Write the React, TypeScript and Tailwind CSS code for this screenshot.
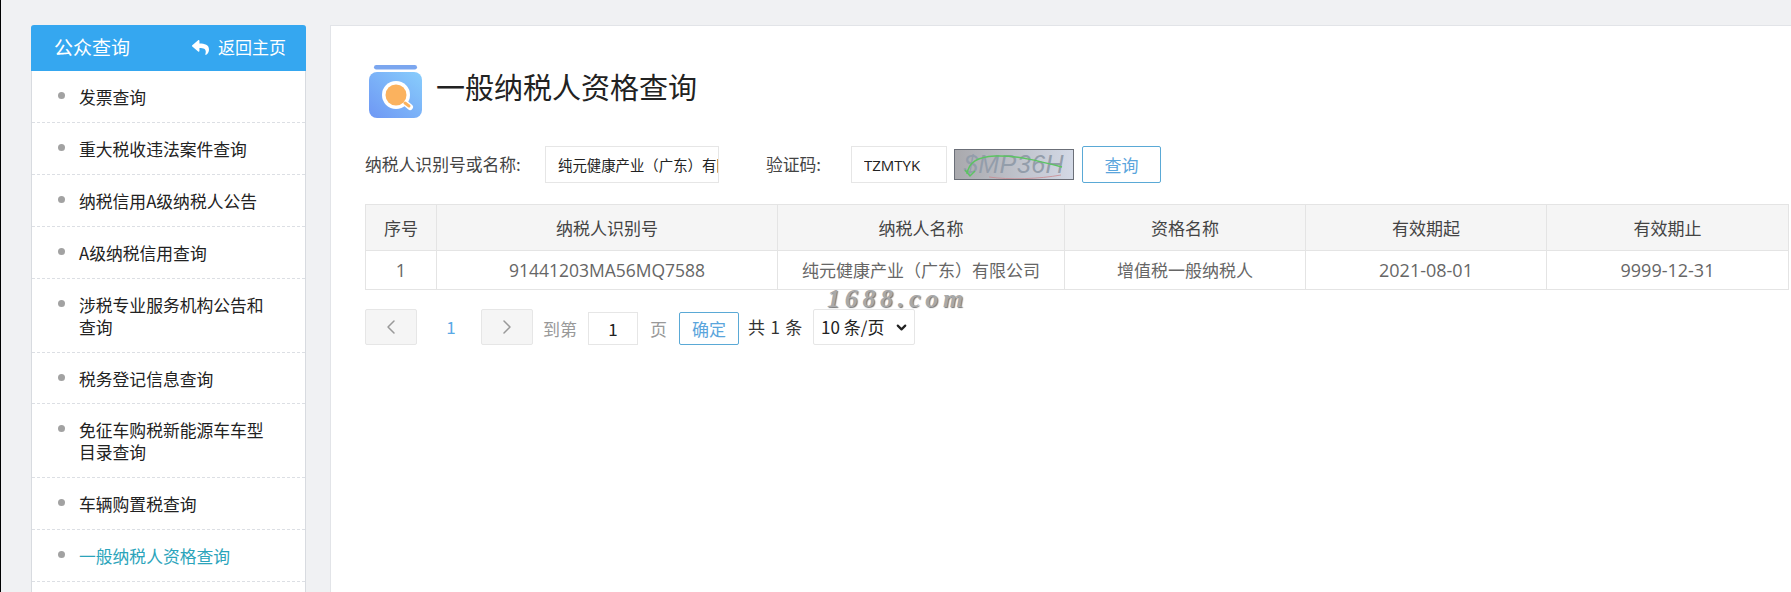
import React from 'react';
import { FaReply } from 'react-icons/fa';
import { ChevronLeft, ChevronRight, ChevronDown } from 'lucide-react';

const menu = [
  { label: '发票查询', h: 'h-[52px]' },
  { label: '重大税收违法案件查询', h: 'h-[52px]' },
  { label: '纳税信用A级纳税人公告', h: 'h-[52px]' },
  { label: 'A级纳税信用查询', h: 'h-[52px]' },
  { label: '涉税专业服务机构公告和查询', h: 'h-[74px]' },
  { label: '税务登记信息查询', h: 'h-[51px]' },
  { label: '免征车购税新能源车车型目录查询', h: 'h-[74px]' },
  { label: '车辆购置税查询', h: 'h-[52px]' },
  { label: '一般纳税人资格查询', h: 'h-[52px]', active: true },
  { label: '', h: 'h-[52px]' },
];

const latin = "font-['Open_Sans'] text-[18px]";

const columns = [
  { title: '序号', value: '1', w: 'w-[71px]', cell: latin },
  { title: '纳税人识别号', value: '91441203MA56MQ7588', w: 'w-[341px]', cell: "font-['Open_Sans'] text-[17.5px]" },
  { title: '纳税人名称', value: '纯元健康产业（广东）有限公司', w: 'w-[287px]', cell: '' },
  { title: '资格名称', value: '增值税一般纳税人', w: 'w-[241px]', cell: '' },
  { title: '有效期起', value: '2021-08-01', w: 'w-[241px]', cell: latin },
  { title: '有效期止', value: '9999-12-31', w: 'w-[242px]', cell: latin },
];

const QueryIcon = () => (
  <svg width="54" height="53" viewBox="0 0 54 53" className="shrink-0">
    <defs>
      <linearGradient id="bookBg" x1="1" y1="0" x2="0" y2="1">
        <stop offset="0" stopColor="#88cdfc" />
        <stop offset="1" stopColor="#6e97f4" />
      </linearGradient>
    </defs>
    <rect x="5" y="0" width="43" height="4.5" rx="2.2" fill="#7ba6ef" />
    <rect x="0" y="7" width="53" height="46" rx="8" fill="url(#bookBg)" />
    <path d="M35 37l6 5" stroke="#fff" strokeWidth="6" strokeLinecap="round" />
    <circle cx="27" cy="30" r="14" fill="#fff" />
    <path d="M36 38l4 3" stroke="#fbb25e" strokeWidth="3" strokeLinecap="round" />
    <circle cx="27" cy="30" r="10.5" fill="#fbb25e" />
  </svg>
);

const Captcha = () => (
  <div className="relative ml-[7px] flex h-[31px] w-[120px] items-center justify-center overflow-hidden border border-[#6b6f78] bg-gradient-to-r from-[#a9a9ad] to-[#d3d9e6]">
    <span className="font-['Liberation_Sans'] text-[25px] italic tracking-[0.5px] text-[#939daa]">$MP36H</span>
    <svg width="120" height="31" viewBox="0 0 120 31" className="absolute left-0 top-0">
      <path d="M12 24C14 12 22 7 40 6C60 5 84 11 107 17" fill="none" stroke="#5cc462" strokeWidth="1.5" />
      <path d="M34 27c20 3 50 2 72-2" fill="none" stroke="#c98a90" strokeWidth="0.8" />
      <path d="M10 20l5 6 5-5" fill="none" stroke="#5cc462" strokeWidth="1.5" />
    </svg>
  </div>
);

export default function App() {
  return (
    <div className="relative flex h-[592px] w-[1791px] overflow-hidden border-l border-l-black bg-[#f0f1f3] pl-[30px] pt-[25px] font-['Noto_Sans_CJK_SC','Open_Sans',sans-serif] text-[#333]">
      <aside className="w-[275px] shrink-0 rounded-t-[3px] border-x border-[#d8dbe0] bg-white">
        <div className="-mx-px flex h-[46px] items-center justify-between rounded-t-[3px] bg-[#35a7f0] pb-[2px] pl-[23px] pr-[20px] text-white">
          <span className="text-[19px]">公众查询</span>
          <span className="flex items-center gap-[9px] text-[17px]">
            <FaReply className="text-[17px]" />
            返回主页
          </span>
        </div>
        {menu.map((item, i) => (
          <div key={i} className={`${item.h} relative border-b border-dashed border-[#dcdfe4] pl-[47px] pr-[30px] pt-[14.5px] text-[16.8px] leading-[22px] ${item.active ? 'text-[#2ba4bb]' : 'text-[#222]'}`}>
            {item.label && <span className="absolute left-[26px] top-[21px] h-[7px] w-[7px] rounded-full bg-[#a2a2a2]" />}
            {item.label}
          </div>
        ))}
      </aside>

      <main className="ml-[24px] flex-1 border-l border-t border-[#e2e4e8] bg-white pl-[34px]">
        <div className="flex h-[120px] items-start pl-[4px] pt-[39px]">
          <QueryIcon />
          <h1 className="ml-[13px] mt-[1px] text-[29px] leading-[40px] text-[#222]">一般纳税人资格查询</h1>
        </div>

        <div className="flex h-[37px] items-center text-[16.8px]">
          <label className="w-[180px] text-[#444]">纳税人识别号或名称:</label>
          <input
            readOnly
            value="纯元健康产业（广东）有限公司"
            className="h-[37px] w-[174px] border border-[#e6e6e6] pl-[12px] pr-0 text-[14.4px] text-[#222] outline-none"
          />
          <label className="ml-[47px] w-[85px] text-[#444]">验证码:</label>
          <input
            readOnly
            value="TZMTYK"
            className="h-[37px] w-[96px] border border-[#e6e6e6] pl-[12px] font-['Open_Sans'] text-[15px] text-[#222] outline-none"
          />
          <Captcha />
          <button className="ml-[8px] h-[37px] w-[79px] rounded-[2px] border border-[#5aa9d6] text-[17px] text-[#5aa5dc]">查询</button>
        </div>

        <div className="mt-[21px] w-[1424px] border-y border-l border-[#e4e4e4] text-[17px]">
          <div className="flex h-[46px] border-b border-[#e4e4e4] bg-[#f5f5f5] text-[#444]">
            {columns.map((c) => (
              <div key={c.title} className={`${c.w} flex items-center justify-center border-r border-[#e4e4e4]`}>{c.title}</div>
            ))}
          </div>
          <div className="flex h-[38px] text-[#666]">
            {columns.map((c) => (
              <div key={c.title} className={`${c.w} ${c.cell} flex items-center justify-center border-r border-[#e4e4e4]`}>{c.value}</div>
            ))}
          </div>
        </div>

        <div className="mt-[19px] flex h-[36px] items-center text-[17px]">
          <button className="flex h-[36px] w-[52px] items-center justify-center rounded-[2px] border border-[#e6e6e6] bg-[#f5f5f5] text-[#999]">
            <ChevronLeft size={24} strokeWidth={1.5} />
          </button>
          <span className="w-[64px] pl-[4px] text-center text-[#5aa9e6]">1</span>
          <button className="flex h-[36px] w-[52px] items-center justify-center rounded-[2px] border border-[#e6e6e6] bg-[#f5f5f5] text-[#999]">
            <ChevronRight size={24} strokeWidth={1.5} />
          </button>
          <span className="ml-[10px] mt-[3px] text-[#999]">到第</span>
          <input readOnly value="1" className="ml-[11px] mt-[3px] h-[33px] w-[50px] border border-[#e6e6e6] text-center text-[17px] text-[#222] outline-none" />
          <span className="ml-[12px] mt-[3px] text-[#999]">页</span>
          <button className="ml-[12px] mt-[3px] h-[33px] w-[60px] rounded-[2px] border border-[#5aa9d6] text-[#5aa5dc]">确定</button>
          <span className="ml-[9px] whitespace-nowrap tracking-[0.8px] text-[#333]">共 1 条</span>
          <div className="relative ml-[10px]">
            <select defaultValue="10" className="h-[36px] w-[102px] appearance-none rounded-[2px] border border-[#e6e6e6] bg-white pl-[7px] text-[17px] text-[#222] outline-none">
              <option value="10">10 条/页</option>
            </select>
            <ChevronDown size={15} strokeWidth={3.5} className="pointer-events-none absolute right-[6px] top-[11px] text-[#222]" />
          </div>
        </div>
      </main>

      <span className="absolute left-[826px] top-[279px] font-['Liberation_Serif'] text-[26px] font-bold italic tracking-[4.7px] text-[#a9a9a9] [text-shadow:1px_1px_1px_#777]">1688.com</span>
    </div>
  );
}
